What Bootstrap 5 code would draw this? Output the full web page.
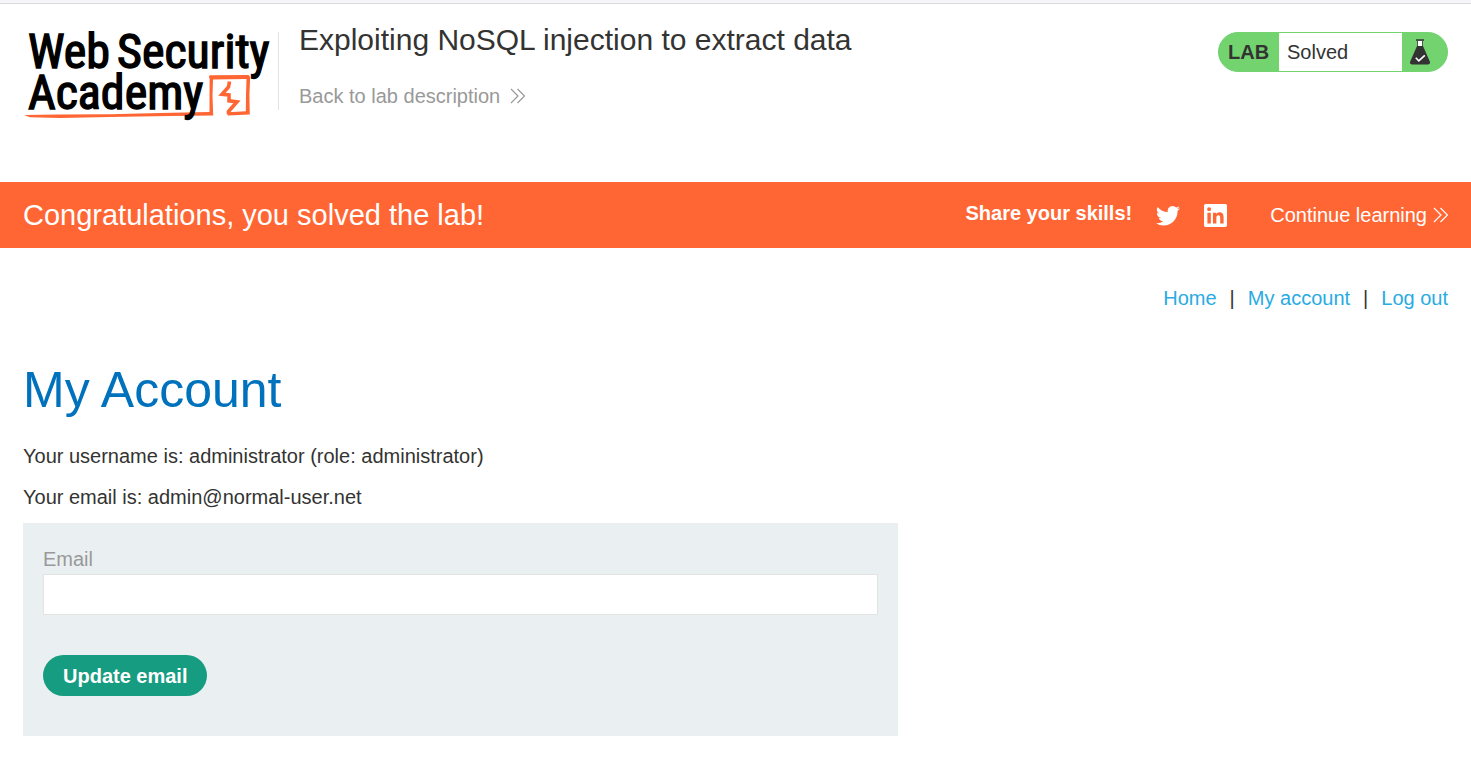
<!DOCTYPE html>
<html lang="en">
<head>
<meta charset="utf-8">
<meta name="viewport" content="width=device-width, initial-scale=1">
<title>Exploiting NoSQL injection to extract data</title>
<link href="https://cdn.jsdelivr.net/npm/bootstrap@5.3.0/dist/css/bootstrap.min.css" rel="stylesheet">
<style>
  body { font-family: "Liberation Sans", Arial, sans-serif; font-size: 20px; line-height: 24px; color: #333332; background: #fff; }
  a { text-decoration: none; }
  .page-x { padding-left: 23px; padding-right: 23px; }
  .top-strip { height: 4px; background: #f6f6f9; border-bottom: 1px solid #dadade; }
  .lab-header { padding-top: 18px; min-height: 178px; }
  .logo-link { padding-top: 8px; margin-right: 4px; }
  .logo-link svg { overflow: visible; }
  .logo-text { font-family: "Roboto Condensed", Roboto, sans-serif; font-weight: 400; font-size: 48px; }
  .title-block { margin-top: 10px; padding-left: 20px; border-left: 1px solid #e3e3e3; height: 78px; }
  .title-block h2 { font-size: 30px; line-height: 36px; margin: -10px 0 26px; }
  .back-link { color: #999; }
  .lab-status { margin-top: 10px; height: 40px; border: 1px solid #72d36f; border-radius: 20px; background: #72d36f; width: 230px; }
  .lab-status strong { width: 60px; padding-left: 9px; }
  .lab-status p { padding-left: 8px; width: 123px; background: #fff; }
  .lab-status svg { margin-left: 8px; }
  .banner { min-height: 66px; background: #ff6633; color: #fff; }
  .banner h4 { font-size: 29px; line-height: 34px; }
  .banner a { color: #fff; }
  .share { padding-bottom: 4px; }
  .continue { margin-left: 43px; }
  .account-nav { padding-top: 38px; gap: 13px; }
  .account-nav a { color: #29abe2; }
  .account-title { font-size: 50px; line-height: 60px; color: #0071bc; margin: 50px 0 24px; }
  .username { margin-bottom: 17px; }
  .email-form { max-width: 875px; background: #eaeff2; padding: 24px 20px 40px; margin-top: 14px; }
  .email-form label { color: #999; line-height: 24px; margin-bottom: 3px; }
  .email-form .form-control { height: 41px; border: 1px solid #e3e3e3; font-size: 20px; }
  .btn-update { margin-top: 40px; height: 41px; padding: 0 20px; border: 0; border-radius: 21px; background: #169c80; color: #fff; font-size: 20px; font-weight: 700; }
  .btn-update:hover { background: #12856d; color: #fff; }
</style>
</head>
<body>
<div class="top-strip"></div>
<header class="lab-header page-x d-flex align-items-start">
  <a class="logo-link flex-shrink-0" href="#" aria-label="Web Security Academy">
    <svg class="d-block" width="251" height="92" viewBox="23 30 251 92">
      <path d="M24 115L60 114.600L110 114.200L160 113L209.500 112L209.600 78.500L208.800 76.500L210 75.300L248.500 75L250.200 77L249.400 95L249.800 114.500L227.500 115.500L227.500 112.200L245.800 111.300L246 95L246.500 79L213 79.500L212.500 96L213.200 115.600L170 116L110 117L60 118L30 117.200Z" fill="#ff6633"/>
      <path d="M229.500 81.500L228.500 87L222 94.300L229 95L229 100.800L237 101.800L228.500 111.500L228.500 114" fill="none" stroke="#ff6633" stroke-width="3.600"/>
      <g class="logo-text" fill="#000" stroke="#000" stroke-width="1.400">
        <text x="28" y="68">Web</text>
        <text x="117" y="68">Security</text>
        <text x="28" y="109">Academy</text>
      </g>
    </svg>
  </a>
  <div class="title-block flex-grow-1">
    <h2>Exploiting NoSQL injection to extract data</h2>
    <a class="back-link d-inline-flex align-items-center" href="#">Back to lab description
      <svg class="ms-2" width="20" height="18" viewBox="1 0 20 18" fill="none" stroke="#999" stroke-width="1.200"><path d="M4 2l7 7-7 7M10.500 2l7 7-7 7"/></svg>
    </a>
  </div>
  <div class="lab-status d-flex align-items-center flex-shrink-0 overflow-hidden">
    <strong>LAB</strong>
    <p class="mb-0 h-100 d-flex align-items-center">Solved</p>
    <svg width="20" height="26" viewBox="0 0 20 26"><path d="M6 1h8" stroke="#333" stroke-width="1.500"/><path d="M7.500 1.500h5v6h-5z" fill="#fff" stroke="#333" stroke-width=".8"/><path d="M7 7h6l7 16q.3 2.500-2 2.500H2Q-.3 25.500 0 23z" fill="#333"/><path d="M5.800 18.800l3 3 6-5.500" fill="none" stroke="#fff" stroke-width="1.600"/></svg>
  </div>
</header>

<section class="banner page-x d-flex align-items-center">
  <h4 class="mb-0 me-auto">Congratulations, you solved the lab!</h4>
  <strong class="share">Share your skills!</strong>
  <a class="ms-4" href="#" aria-label="Twitter"><svg class="d-block" width="24" height="24" viewBox="0 0 16 16" fill="#fff"><path d="M5.026 15c6.038 0 9.341-5.003 9.341-9.334 0-.14 0-.282-.006-.422A6.685 6.685 0 0 0 16 3.542a6.658 6.658 0 0 1-1.889.518 3.301 3.301 0 0 0 1.447-1.817 6.533 6.533 0 0 1-2.087.793A3.286 3.286 0 0 0 7.875 6.03a9.325 9.325 0 0 1-6.767-3.429 3.289 3.289 0 0 0 1.018 4.382A3.323 3.323 0 0 1 .64 6.575v.045a3.288 3.288 0 0 0 2.632 3.218 3.203 3.203 0 0 1-.865.115 3.230 3.230 0 0 1-.614-.057 3.283 3.283 0 0 0 3.067 2.277A6.588 6.588 0 0 1 .78 13.580a6.320 6.320 0 0 1-.78-.045A9.344 9.344 0 0 0 5.026 15z"/></svg></a>
  <a class="ms-4" href="#" aria-label="LinkedIn"><svg class="d-block" width="23" height="23" viewBox="0 0 24 24" fill="#fff"><path d="M20.450 20.450h-3.550v-5.570c0-1.330-.03-3.040-1.850-3.040-1.850 0-2.140 1.450-2.140 2.940v5.670H9.350V9h3.410v1.560h.05c.48-.9 1.640-1.850 3.370-1.850 3.600 0 4.270 2.370 4.270 5.460v6.280zM5.340 7.430a2.060 2.060 0 1 1 0-4.130 2.060 2.060 0 0 1 0 4.130zM7.120 20.450H3.550V9h3.570v11.450zM22.220 0H1.770C.79 0 0 .77 0 1.730v20.540C0 23.230.79 24 1.770 24h20.450c.98 0 1.780-.77 1.780-1.730V1.730C24 .77 23.200 0 22.220 0z"/></svg></a>
  <a class="continue d-flex align-items-center" href="#">Continue learning
    <svg class="ms-1" width="17" height="18" viewBox="1 0 17 18" fill="none" stroke="#fff" stroke-width="1.200"><path d="M4 2l7 7-7 7M10.500 2l7 7-7 7"/></svg>
  </a>
</section>

<main class="page-x">
  <nav class="account-nav d-flex justify-content-end" aria-label="Account">
    <a href="#">Home</a><span>|</span><a href="#">My account</a><span>|</span><a href="#">Log out</a>
  </nav>
  <h1 class="account-title">My Account</h1>
  <p class="username">Your username is: administrator (role: administrator)</p>
  <p class="mb-0">Your email is: admin@normal-user.net</p>
  <form class="email-form">
    <label class="d-block" for="email">Email</label>
    <input class="form-control rounded-0" type="email" id="email">
    <button class="btn btn-update" type="submit">Update email</button>
  </form>
</main>
<script src="https://cdn.jsdelivr.net/npm/bootstrap@5.3.0/dist/js/bootstrap.bundle.min.js"></script>
</body>
</html>
